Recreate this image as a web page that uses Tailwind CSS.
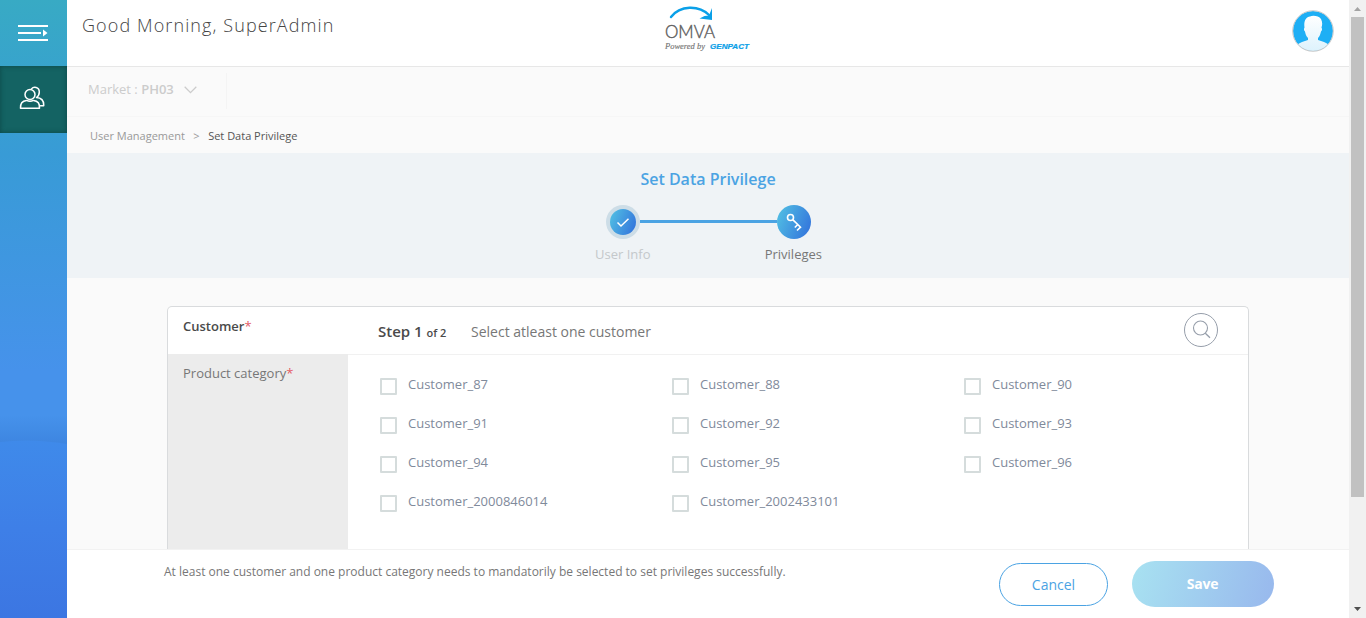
<!DOCTYPE html>
<html lang="en">
<head>
<meta charset="utf-8">
<title>Set Data Privilege</title>
<script src="https://cdn.jsdelivr.net/npm/@tailwindcss/browser@4"></script>
</head>
<body class="flex h-[618px] w-[1366px] overflow-hidden bg-[#fafafa] font-['Open_Sans',sans-serif] text-[13px] text-[#777]">

<aside class="relative h-full w-[67px] shrink-0 overflow-hidden bg-linear-to-b from-[#38aac4] via-[#389bd6] via-25% to-[#4692eb] to-60%">
  <svg class="absolute left-0 top-[415px]" width="67" height="203" viewBox="0 -15 67 203">
    <defs>
      <linearGradient id="wave" x1="0" y1="0" x2="0" y2="1"><stop offset="0" stop-color="#3f8aea"/><stop offset=".5" stop-color="#3e7fe7"/><stop offset="1" stop-color="#3c76e2"/></linearGradient>
      <linearGradient id="shade" x1="0" y1="0" x2="0" y2="1"><stop offset="0" stop-color="#3d86e0" stop-opacity="0"/><stop offset="1" stop-color="#3d84e0"/></linearGradient>
    </defs>
    <path d="M0-15H67V15H0Z" fill="url(#shade)"/>
    <path d="M0 12Q32 8 67 14V188H0Z" fill="url(#wave)"/>
  </svg>
  <div class="flex h-[66px] items-center pl-[18px]">
    <svg width="30" height="18" viewBox="0 0 30 18" fill="#fff"><path d="M0 1H30V3H0ZM0 8H23V10H0ZM0 15H30V17H0ZM25 5.500L29.500 9L25 12.500Z"/></svg>
  </div>
  <div class="flex h-[67px] items-center bg-[#146363] pl-[18px] shadow-[inset_0_0_5px_#0c4747]">
    <svg class="-mt-[4px]" width="27" height="24" viewBox="0 0 27 24" fill="none" stroke="#fff" stroke-width="1.5" stroke-linecap="round" stroke-linejoin="round"><circle cx="12" cy="8.500" r="5"/><path d="M2.500 22.200C2.100 16.500 5 14.800 8.500 14.400Q12 16 15.500 14.400C19 14.800 22 17 21.500 22.200Z"/><path d="M13.500 2.900C15.500 .3 21.300.7 21.300 6C21.300 8.500 20 10.500 18.500 11.500C23 11.800 26 14.500 25.700 19.800H22.500"/></svg>
  </div>
</aside>

<div class="flex h-full w-[1282px] shrink-0 flex-col">
  <header class="flex h-[67px] shrink-0 items-start border-b border-[#e7e7e7] bg-white">
    <h1 class="ml-[15px] mt-[12px] w-[581px] text-[18px] font-light leading-[26px] tracking-[1.1px] text-[#444]">Good Morning, SuperAdmin</h1>
    <svg class="w-[90px]" height="60" viewBox="0 0 90 60">
      <path d="M8 17C17 5 36 5 46 15" fill="none" stroke="#0aa0e8" stroke-width="2.400" stroke-linecap="round"/>
      <path d="M49 8V20L36.500 18.500L41.500 16L46 15.500Z" fill="#0aa0e8"/>
      <text x="2" y="38" font-family="Lato" font-weight="300" font-size="17" fill="#606060" stroke="#606060" stroke-width=".4" textLength="50" lengthAdjust="spacingAndGlyphs">OMVA</text>
      <text x="2" y="49" font-family="Liberation Serif" font-style="italic" font-size="8" fill="#777" stroke="#777" stroke-width=".15" textLength="40" lengthAdjust="spacingAndGlyphs">Powered by</text>
      <text x="47" y="48.500" font-family="Liberation Sans" font-style="italic" font-weight="bold" font-size="7.200" fill="#0aa0e8" stroke="#0aa0e8" stroke-width=".2" textLength="39" lengthAdjust="spacingAndGlyphs">GENPACT</text>
    </svg>
    <svg class="ml-auto mr-[15px] mt-[10px]" width="42" height="42" viewBox="0 0 42 42">
      <defs><linearGradient id="face" x1="0" y1="0" x2="0" y2="1"><stop offset="0" stop-color="#fff"/><stop offset="1" stop-color="#dcf2fc"/></linearGradient><clipPath id="disc"><circle cx="21" cy="21" r="20"/></clipPath></defs>
      <circle cx="21" cy="21" r="20" fill="#1eaff5"/>
      <path clip-path="url(#disc)" d="M16 30V28C14 26 13.500 24 13 21.500C12 21 11.500 19 12.500 17.500C11.500 11 14 7 18 6.500C21 5 27 6 29 9C30.500 12 30.500 15 29.500 17.500C30.500 19 30 21 29 21.500C28.500 24 27.500 26.500 26 28V30C30 31.500 34 32 38 36V42H4V36C8 32 12 31.500 16 30Z" fill="url(#face)"/>
      <circle cx="21" cy="21" r="20.300" fill="none" stroke="#c9c9c9" stroke-width="1"/>
    </svg>
  </header>

  <div class="flex h-[50px] shrink-0 items-start border-b border-[#f6f6f6]">
    <div class="mt-[6px] flex h-[36px] w-[160px] items-center border-r border-[#f4f4f4] pl-[21px] text-[#ccc]">
      <span class="-mt-[3px]">Market : <b class="font-semibold">PH03</b></span>
      <svg class="-mt-[2px] ml-[10.500px]" width="13" height="8" viewBox="0 0 13 8" fill="none" stroke="#ccc" stroke-width="1.300"><path d="M.7.8L6.500 6.600L12.300.8"/></svg>
    </div>
  </div>

  <nav class="flex h-[36px] shrink-0 items-center gap-[8.5px] pl-[23px] pt-[2px] text-[11px] text-[#999]">
    <span>User Management</span><span>&gt;</span><span class="text-[#555]">Set Data Privilege</span>
  </nav>

  <section class="flex h-[125px] shrink-0 flex-col items-center bg-[#eff3f6]">
    <h2 class="mt-[14px] text-[16px] font-semibold leading-6 text-[#4ba3e3]">Set Data Privilege</h2>
    <div class="ml-px mt-[14px] flex w-[205px] items-center">
      <svg width="34" height="34" viewBox="0 0 34 34"><defs><linearGradient id="step" x1="0" y1=".3" x2="1" y2=".7"><stop stop-color="#50bce3"/><stop offset="1" stop-color="#3476dc"/></linearGradient></defs><circle cx="17" cy="17" r="17" fill="#cddde7"/><circle cx="17" cy="17" r="13" fill="url(#step)"/><path d="M11.500 17.500L15 21L22.500 13.800" fill="none" stroke="#fff" stroke-width="1.500"/></svg>
      <div class="mt-[15px] h-[3px] flex-1 self-start bg-[#4ba3e3]"></div>
      <svg width="34" height="34" viewBox="0 0 34 34"><circle cx="17" cy="17" r="17" fill="url(#step)"/><g fill="none" stroke="#fff" stroke-width="1.600"><circle cx="13.500" cy="12.500" r="3"/><path d="M15.700 14.700L23.500 22.200L20 25.500M20.800 19.500L17.800 22.500"/></g></svg>
    </div>
    <div class="ml-px mt-[6px] flex w-[227px] justify-between leading-[18px]"><span class="text-[#c4c8cb]">User Info</span><span>Privileges</span></div>
  </section>

  <main class="ml-[100px] mt-[28px] flex min-h-0 w-[1082px] flex-1 overflow-hidden rounded-t-[5px] border border-b-0 border-[#d9dbdd] bg-white">
    <div class="flex w-[180px] shrink-0 flex-col leading-[18px]">
      <div class="h-[47px] pl-[15px] pt-[10px] font-semibold text-[#4a4a4a]">Customer<span class="font-normal text-[#e45c66]">*</span></div>
      <div class="flex-1 bg-[#ececec] pl-[15px] pt-[10px]">Product category<span class="text-[#e45c66]">*</span></div>
    </div>
    <div class="flex flex-1 flex-col">
      <div class="flex h-[48px] shrink-0 items-center border-b border-[#f1f1f1] pl-[30px] pr-[30px]">
        <div class="mt-[2px] w-[93px] whitespace-nowrap text-[15px] font-semibold leading-[20px] text-[#4a4a4a]">Step 1 <span class="text-[11px]">of 2</span></div>
        <div class="mt-[2px] text-[14px] leading-[20px]">Select atleast one customer</div>
        <svg class="ml-auto -mt-[1px] mr-2" width="34" height="34" viewBox="0 0 34 34" fill="none" stroke="#969eaa"><circle cx="17" cy="17" r="16.500" stroke-width="1"/><circle cx="16.500" cy="15" r="7" stroke-width="1.100"/><path d="M21.300 20.200L26 24.800" stroke-width="1.300"/></svg>
      </div>
      <div id="customers" class="grid grid-cols-[292px_292px_292px] auto-rows-[39px] pl-[32px] pt-[19px]"></div>
    </div>
  </main>

  <footer class="flex h-[69px] shrink-0 items-start border-t border-[#f2f2f2] bg-white pl-[97px]">
    <p class="mt-[13px] w-[835px] text-[12px] leading-[18px]">At least one customer and one product category needs to mandatorily be selected to set privileges successfully.</p>
    <button class="mt-[13px] h-[43px] w-[109px] rounded-full border border-[#4ba3e3] text-[14px] text-[#4ba3e3]">Cancel</button>
    <button class="ml-[24px] mt-[11px] h-[46px] w-[142px] rounded-full bg-linear-[105deg] from-[#a8e2f1] to-[#98b8ed] pb-[2px] pr-px text-[14px] font-bold tracking-[-0.2px] text-white">Save</button>
  </footer>
</div>

<div class="flex h-full w-[17px] shrink-0 flex-col items-center bg-[#f1f1f1]">
  <svg width="17" height="17" viewBox="0 0 17 17"><path d="M5 11L8.500 7L12 11Z" fill="#a3a3a3"/></svg>
  <div class="h-[480px] w-[13px] bg-[#c1c1c1]"></div>
  <svg class="mt-auto" width="17" height="17" viewBox="0 0 17 17"><path d="M5 6L8.500 10L12 6Z" fill="#505050"/></svg>
</div>

<script>
const ids = ['87','88','90','91','92','93','94','95','96','2000846014','2002433101'];
document.getElementById('customers').innerHTML = ids.map(id =>
  `<label class="flex items-start text-[#7f8a9b]"><span class="mt-[4px] size-[17px] rounded-[1px] border-2 border-[#d5dcdc] bg-white"></span><span class="ml-[11px] leading-[20px]">Customer_${id}</span></label>`).join('');
</script>
</body>
</html>
